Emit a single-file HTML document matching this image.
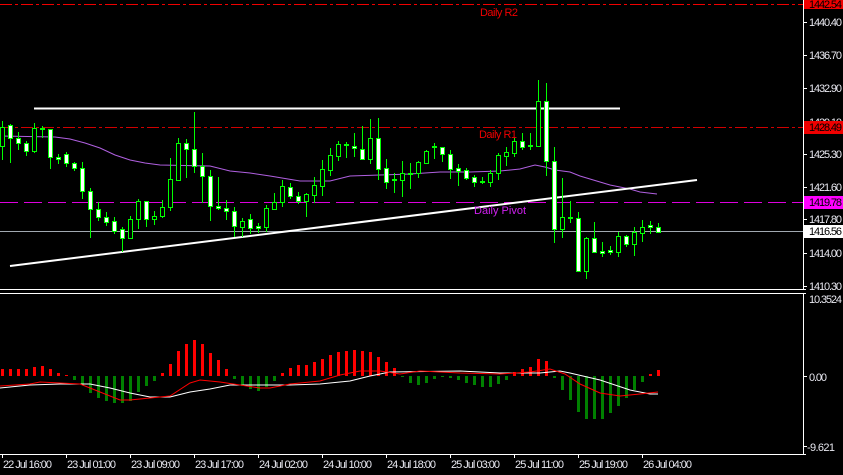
<!DOCTYPE html>
<html><head><meta charset="utf-8"><style>
html,body{margin:0;padding:0;background:#000;width:843px;height:475px;overflow:hidden}
svg{display:block}
text{font-family:"Liberation Sans",sans-serif;font-size:11px}
</style></head><body>
<svg width="843" height="475" viewBox="0 0 843 475" xmlns="http://www.w3.org/2000/svg">
<rect width="843" height="475" fill="#000"/>
<line x1="0" y1="4.5" x2="803" y2="4.5" stroke="#f00000" stroke-dasharray="12 3 3 3"/>
<line x1="0" y1="127.5" x2="803" y2="127.5" stroke="#d00000" stroke-dasharray="12 3 3 3"/>
<line x1="0" y1="202.5" x2="803" y2="202.5" stroke="#dd00dd" stroke-dasharray="18 6"/>
<line x1="0" y1="231.5" x2="803" y2="231.5" stroke="#a0a8b0"/>
<text x="480" y="16" fill="#f00000" textLength="38">Daily R2</text>
<text x="479" y="138" fill="#f00000" textLength="38">Daily R1</text>
<polyline fill="none" stroke="#b060e0" stroke-width="1" points="0,136 55,137 70,139 85,143 100,148 115,155 130,160 145,163 160,165 210,166 230,171 250,173 270,176 300,181 330,181 350,176 380,175 410,174 440,172 470,172 500,171 520,169 535,165 545,167 555,170 570,172 580,176 590,179 600,182 610,185 620,187 630,189 640,192 657,194"/>
<line x1="34" y1="108.5" x2="620" y2="108.5" stroke="#fff" stroke-width="2"/>
<line x1="10" y1="266" x2="697" y2="180" stroke="#fff" stroke-width="2"/>
<text x="474" y="214" fill="#d020f0" textLength="52">Daily Pivot</text>
<path stroke="#00ff00" fill="none" d="M2.5 121V160M10.5 124V163M18.5 132V150M26.5 141V156M34.5 123V153M42.5 126V138M50.5 129V169M58.5 154V164M66.5 152V167M74.5 162V171M82.5 162V199M90.5 188V238M98.5 202V221M106.5 212V226M114.5 217V234M122.5 227V252M130.5 216V239M138.5 199V229M146.5 201V227M154.5 211V225M162.5 200V218M170.5 158V211M178.5 138V181M186.5 139V178M194.5 112V173M202.5 153V203M210.5 170V221M218.5 177V210M226.5 200V220M234.5 207V237M242.5 218V237M250.5 214V234M258.5 223V233M266.5 205V232M274.5 193V210M282.5 180V207M290.5 183V199M298.5 192V204M306.5 193V217M314.5 177V203M322.5 160V196M330.5 148V176M338.5 141V161M346.5 142V158M354.5 133V157M362.5 126V160M370.5 119V164M378.5 118V180M386.5 159V189M394.5 173V193M402.5 161V197M410.5 163V189M418.5 161V178M426.5 150V164M434.5 143V159M442.5 147V162M450.5 150V179M458.5 164V186M466.5 168V180M474.5 175V187M482.5 177V184M490.5 170V187M498.5 153V180M506.5 147V166M514.5 138V157M522.5 133V150M530.5 133V150M538.5 80V147M546.5 83V176M554.5 147V243M562.5 178V238M570.5 201V223M578.5 212V272M586.5 237V279M594.5 222V252M602.5 242V257M610.5 246V255M618.5 232V257M626.5 235V247M634.5 227V256M642.5 220V242M650.5 221V234M658.5 223V233"/>
<g stroke="#00ff00" stroke-width="1">
<rect x="0.5" y="127.5" width="4" height="19" fill="#000"/>
<rect x="8.5" y="125.5" width="4" height="13" fill="#fff"/>
<rect x="16.5" y="138.5" width="4" height="5" fill="#fff"/>
<rect x="24.5" y="143.5" width="4" height="8" fill="#fff"/>
<rect x="32.5" y="128.5" width="4" height="23" fill="#000"/>
<rect x="40.5" y="128.5" width="4" height="1" fill="#0f0"/>
<rect x="48.5" y="129.5" width="4" height="28" fill="#fff"/>
<rect x="56.5" y="157.5" width="4" height="2" fill="#fff"/>
<rect x="64.5" y="154.5" width="4" height="9" fill="#fff"/>
<rect x="72.5" y="163.5" width="4" height="5" fill="#fff"/>
<rect x="80.5" y="168.5" width="4" height="23" fill="#fff"/>
<rect x="88.5" y="191.5" width="4" height="18" fill="#fff"/>
<rect x="96.5" y="209.5" width="4" height="8" fill="#fff"/>
<rect x="104.5" y="217.5" width="4" height="5" fill="#fff"/>
<rect x="112.5" y="221.5" width="4" height="10" fill="#fff"/>
<rect x="120.5" y="229.5" width="4" height="9" fill="#fff"/>
<rect x="128.5" y="219.5" width="4" height="19" fill="#000"/>
<rect x="136.5" y="201.5" width="4" height="18" fill="#000"/>
<rect x="144.5" y="201.5" width="4" height="18" fill="#fff"/>
<rect x="152.5" y="216.5" width="4" height="3" fill="#000"/>
<rect x="160.5" y="207.5" width="4" height="9" fill="#000"/>
<rect x="168.5" y="179.5" width="4" height="28" fill="#000"/>
<rect x="176.5" y="143.5" width="4" height="37" fill="#000"/>
<rect x="184.5" y="143.5" width="4" height="6" fill="#fff"/>
<rect x="192.5" y="149.5" width="4" height="17" fill="#fff"/>
<rect x="200.5" y="166.5" width="4" height="10" fill="#fff"/>
<rect x="208.5" y="176.5" width="4" height="30" fill="#fff"/>
<rect x="216.5" y="206.5" width="4" height="2" fill="#fff"/>
<rect x="224.5" y="208.5" width="4" height="3" fill="#fff"/>
<rect x="232.5" y="211.5" width="4" height="15" fill="#fff"/>
<rect x="240.5" y="221.5" width="4" height="6" fill="#000"/>
<rect x="248.5" y="219.5" width="4" height="9" fill="#fff"/>
<rect x="256.5" y="226.5" width="4" height="2" fill="#fff"/>
<rect x="264.5" y="208.5" width="4" height="19" fill="#000"/>
<rect x="272.5" y="202.5" width="4" height="7" fill="#000"/>
<rect x="280.5" y="186.5" width="4" height="16" fill="#000"/>
<rect x="288.5" y="187.5" width="4" height="9" fill="#fff"/>
<rect x="296.5" y="196.5" width="4" height="5" fill="#fff"/>
<rect x="304.5" y="194.5" width="4" height="7" fill="#000"/>
<rect x="312.5" y="185.5" width="4" height="10" fill="#000"/>
<rect x="320.5" y="169.5" width="4" height="17" fill="#000"/>
<rect x="328.5" y="155.5" width="4" height="15" fill="#000"/>
<rect x="336.5" y="144.5" width="4" height="12" fill="#000"/>
<rect x="344.5" y="144.5" width="4" height="1" fill="#0f0"/>
<rect x="352.5" y="146.5" width="4" height="2" fill="#fff"/>
<rect x="360.5" y="149.5" width="4" height="10" fill="#fff"/>
<rect x="368.5" y="138.5" width="4" height="21" fill="#000"/>
<rect x="376.5" y="138.5" width="4" height="31" fill="#fff"/>
<rect x="384.5" y="168.5" width="4" height="14" fill="#fff"/>
<rect x="392.5" y="179.5" width="4" height="1" fill="#0f0"/>
<rect x="400.5" y="173.5" width="4" height="7" fill="#000"/>
<rect x="408.5" y="173.5" width="4" height="1" fill="#0f0"/>
<rect x="416.5" y="162.5" width="4" height="11" fill="#000"/>
<rect x="424.5" y="151.5" width="4" height="12" fill="#000"/>
<rect x="432.5" y="146.5" width="4" height="1" fill="#0f0"/>
<rect x="440.5" y="147.5" width="4" height="7" fill="#fff"/>
<rect x="448.5" y="154.5" width="4" height="15" fill="#fff"/>
<rect x="456.5" y="168.5" width="4" height="3" fill="#fff"/>
<rect x="464.5" y="170.5" width="4" height="8" fill="#fff"/>
<rect x="472.5" y="177.5" width="4" height="5" fill="#fff"/>
<rect x="480.5" y="181.5" width="4" height="1" fill="#0f0"/>
<rect x="488.5" y="173.5" width="4" height="9" fill="#000"/>
<rect x="496.5" y="155.5" width="4" height="18" fill="#000"/>
<rect x="504.5" y="152.5" width="4" height="4" fill="#000"/>
<rect x="512.5" y="141.5" width="4" height="12" fill="#000"/>
<rect x="520.5" y="141.5" width="4" height="6" fill="#fff"/>
<rect x="528.5" y="145.5" width="4" height="1" fill="#0f0"/>
<rect x="536.5" y="101.5" width="4" height="45" fill="#000"/>
<rect x="544.5" y="101.5" width="4" height="60" fill="#fff"/>
<rect x="552.5" y="161.5" width="4" height="68" fill="#fff"/>
<rect x="560.5" y="217.5" width="4" height="12" fill="#000"/>
<rect x="568.5" y="217.5" width="4" height="1" fill="#0f0"/>
<rect x="576.5" y="218.5" width="4" height="53" fill="#fff"/>
<rect x="584.5" y="238.5" width="4" height="33" fill="#000"/>
<rect x="592.5" y="238.5" width="4" height="14" fill="#fff"/>
<rect x="600.5" y="251.5" width="4" height="2" fill="#fff"/>
<rect x="608.5" y="250.5" width="4" height="2" fill="#fff"/>
<rect x="616.5" y="236.5" width="4" height="16" fill="#000"/>
<rect x="624.5" y="236.5" width="4" height="8" fill="#fff"/>
<rect x="632.5" y="232.5" width="4" height="12" fill="#000"/>
<rect x="640.5" y="227.5" width="4" height="6" fill="#000"/>
<rect x="648.5" y="225.5" width="4" height="2" fill="#fff"/>
<rect x="656.5" y="227.5" width="4" height="5" fill="#fff"/>
</g>
<line x1="0" y1="289.5" x2="806" y2="289.5" stroke="#fff"/>
<line x1="0" y1="293.5" x2="806" y2="293.5" stroke="#fff"/>
<line x1="0" y1="454.5" x2="806" y2="454.5" stroke="#fff"/>
<line x1="803.5" y1="0" x2="803.5" y2="289" stroke="#fff"/>
<line x1="803.5" y1="294" x2="803.5" y2="455" stroke="#fff"/>
<path stroke="#fff" d="M803 22.5h4M803 55.5h4M803 88.5h4M803 154.5h4M803 187.5h4M803 219.5h4M803 253.5h4M803 286.5h4M803 376.5h4M803 446.5h4"/>
<rect x="804" y="0" width="39" height="9" fill="#f00000"/>
<text x="809" y="8" fill="#000" textLength="33">1442.54</text>
<g fill="#e8e8f0">
<text x="809" y="26" textLength="33">1440.40</text>
<text x="809" y="59" textLength="33">1436.70</text>
<text x="809" y="92" textLength="33">1432.90</text>
<text x="809" y="126" textLength="33">1429.10</text>
<text x="809" y="158" textLength="33">1425.30</text>
<text x="809" y="191" textLength="33">1421.60</text>
<text x="809" y="223" textLength="33">1417.80</text>
<text x="809" y="257" textLength="33">1414.00</text>
<text x="809" y="290" textLength="33">1410.30</text>
<text x="809" y="303" textLength="33">10.3524</text>
<text x="809" y="381" textLength="18">0.00</text>
<text x="807" y="451" textLength="28">-9.621</text>
</g>
<rect x="804" y="121" width="39" height="13" fill="#f00000"/>
<text x="809" y="131" fill="#000" textLength="33">1428.49</text>
<rect x="804" y="196" width="39" height="13" fill="#ff00ff"/>
<text x="809" y="206" fill="#000" textLength="33">1419.78</text>
<rect x="804" y="225" width="39" height="13" fill="#fff"/>
<text x="809" y="235" fill="#000" textLength="33">1416.56</text>
<g fill="#ff0000">
<rect x="1" y="369" width="3" height="7"/><rect x="9" y="369" width="3" height="7"/><rect x="17" y="369" width="3" height="7"/><rect x="25" y="369" width="3" height="7"/><rect x="33" y="367" width="3" height="9"/><rect x="41" y="366" width="3" height="10"/><rect x="49" y="369" width="3" height="7"/><rect x="57" y="373" width="3" height="3"/><rect x="65" y="375" width="3" height="1"/>
<rect x="161" y="373" width="3" height="3"/><rect x="169" y="364" width="3" height="12"/><rect x="177" y="351" width="3" height="25"/><rect x="185" y="344" width="3" height="32"/><rect x="193" y="340" width="3" height="36"/><rect x="201" y="344" width="3" height="32"/><rect x="209" y="353" width="3" height="23"/><rect x="217" y="360" width="3" height="16"/><rect x="225" y="369" width="3" height="7"/>
<rect x="281" y="373" width="3" height="3"/><rect x="289" y="368" width="3" height="8"/><rect x="297" y="365" width="3" height="11"/><rect x="305" y="365" width="3" height="11"/><rect x="313" y="362" width="3" height="14"/><rect x="321" y="359" width="3" height="17"/><rect x="329" y="355" width="3" height="21"/><rect x="337" y="352" width="3" height="24"/><rect x="345" y="351" width="3" height="25"/><rect x="353" y="350" width="3" height="26"/><rect x="361" y="351" width="3" height="25"/><rect x="369" y="352" width="3" height="24"/><rect x="377" y="357" width="3" height="19"/><rect x="385" y="362" width="3" height="14"/><rect x="393" y="368" width="3" height="8"/>
<rect x="513" y="372" width="3" height="4"/><rect x="521" y="369" width="3" height="7"/><rect x="529" y="367" width="3" height="9"/><rect x="537" y="359" width="3" height="17"/><rect x="545" y="361" width="3" height="15"/>
<rect x="649" y="374" width="3" height="2"/><rect x="657" y="370" width="3" height="6"/>
</g>
<g fill="#008000">
<rect x="73" y="376" width="3" height="4"/><rect x="81" y="376" width="3" height="9"/><rect x="89" y="376" width="3" height="17"/><rect x="97" y="376" width="3" height="22"/><rect x="105" y="376" width="3" height="25"/><rect x="113" y="376" width="3" height="27"/><rect x="121" y="376" width="3" height="27"/><rect x="129" y="376" width="3" height="25"/><rect x="137" y="376" width="3" height="16"/><rect x="145" y="376" width="3" height="10"/><rect x="153" y="376" width="3" height="5"/>
<rect x="233" y="376" width="3" height="3"/><rect x="241" y="376" width="3" height="10"/><rect x="249" y="376" width="3" height="13"/><rect x="257" y="376" width="3" height="15"/><rect x="265" y="376" width="3" height="11"/><rect x="273" y="376" width="3" height="5"/>
<rect x="401" y="376" width="3" height="1"/><rect x="409" y="376" width="3" height="7"/><rect x="417" y="376" width="3" height="9"/><rect x="425" y="376" width="3" height="7"/><rect x="433" y="376" width="3" height="3"/><rect x="441" y="376" width="3" height="1"/><rect x="449" y="376" width="3" height="2"/><rect x="457" y="376" width="3" height="4"/><rect x="465" y="376" width="3" height="7"/><rect x="473" y="376" width="3" height="9"/><rect x="481" y="376" width="3" height="11"/><rect x="489" y="376" width="3" height="11"/><rect x="497" y="376" width="3" height="8"/><rect x="505" y="376" width="3" height="4"/>
<rect x="553" y="376" width="3" height="2"/><rect x="561" y="376" width="3" height="14"/><rect x="569" y="376" width="3" height="24"/><rect x="577" y="376" width="3" height="36"/><rect x="585" y="376" width="3" height="43"/><rect x="593" y="376" width="3" height="43"/><rect x="601" y="376" width="3" height="43"/><rect x="609" y="376" width="3" height="37"/><rect x="617" y="376" width="3" height="30"/><rect x="625" y="376" width="3" height="22"/><rect x="633" y="376" width="3" height="14"/><rect x="641" y="376" width="3" height="6"/>
</g>
<polyline fill="none" stroke="#fff" points="0,388 30,385 60,384 90,384 110,388 130,393 150,397 170,397 190,392 210,389 230,385 290,385 320,384 350,381 370,376 390,372 460,371 500,373 540,373 560,371 570,373 600,380 630,390 650,394 658,394"/>
<polyline fill="none" stroke="#ff0000" points="0,386 30,384 40,382 60,383 80,384 100,392 120,400 130,400 150,398 170,396 190,383 200,380 220,382 260,388 270,388 290,384 320,381 340,375 360,371 380,371 400,374 420,371 460,373 500,374 530,372 550,369 565,374 580,384 600,393 620,396 640,394 658,392"/>
<path stroke="#fff" d="M2.5 454v4M66.5 454v4M130.5 454v4M194.5 454v4M258.5 454v4M322.5 454v4M386.5 454v4M450.5 454v4M514.5 454v4M578.5 454v4M642.5 454v4"/>
<g fill="#e8e8f0">
<text x="3" y="468" textLength="49">22 Jul 16:00</text>
<text x="67" y="468" textLength="49">23 Jul 01:00</text>
<text x="131" y="468" textLength="49">23 Jul 09:00</text>
<text x="195" y="468" textLength="49">23 Jul 17:00</text>
<text x="259" y="468" textLength="49">24 Jul 02:00</text>
<text x="323" y="468" textLength="49">24 Jul 10:00</text>
<text x="387" y="468" textLength="49">24 Jul 18:00</text>
<text x="451" y="468" textLength="49">25 Jul 03:00</text>
<text x="515" y="468" textLength="49">25 Jul 11:00</text>
<text x="579" y="468" textLength="49">25 Jul 19:00</text>
<text x="643" y="468" textLength="49">26 Jul 04:00</text>
</g>
</svg>
</body></html>
